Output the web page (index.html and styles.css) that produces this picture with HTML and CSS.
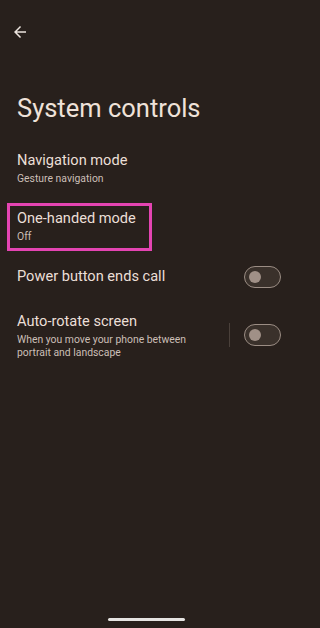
FILE: index.html
```html
<!DOCTYPE html>
<html>
<head>
<meta charset="utf-8">
<link rel="stylesheet" href="styles.css">
</head>
<body>
<div class="screen">
  <div class="topbar">
    <svg class="back" viewBox="0 0 24 24" width="18" height="18"><path d="M20 11H7.83l5.59-5.59L12 4l-8 8 8 8 1.41-1.41L7.83 13H20v-2z" fill="#ece4de"/></svg>
  </div>
  <h1 class="title">System controls</h1>
  <div class="list">
    <div class="item">
      <div class="text">
        <div class="label">Navigation mode</div>
        <div class="sub">Gesture navigation</div>
      </div>
    </div>
    <div class="item highlighted">
      <div class="text">
        <div class="label">One-handed mode</div>
        <div class="sub">Off</div>
      </div>
      <div class="mark"></div>
    </div>
    <div class="item">
      <div class="text">
        <div class="label">Power button ends call</div>
      </div>
      <div class="switch"><div class="knob"></div></div>
    </div>
    <div class="item">
      <div class="text narrow">
        <div class="label">Auto-rotate screen</div>
        <div class="sub">When you move your phone between portrait and landscape</div>
      </div>
      <div class="divider"></div>
      <div class="switch"><div class="knob"></div></div>
    </div>
  </div>
  <div class="navbar"><div class="handle"></div></div>
</div>
</body>
</html>
```
FILE: styles.css
```css
html, body {
  margin: 0;
  padding: 0;
  background: #28201c;
}
body {
  font-family: Roboto, "Noto Sans", sans-serif;
  color: #ece0d8;
}
.screen {
  width: 293px;
  height: 628px;
  display: flex;
  flex-direction: column;
  overflow: hidden;
}
.topbar {
  padding: 23px 0 0 11px;
  height: 18px;
}
.back {
  display: block;
}
.title {
  margin: 51px 0 0 17px;
  font-size: 25.5px;
  line-height: 32px;
  font-weight: 400;
  color: #efe2d9;
}
.list {
  margin-top: 14px;
  display: flex;
  flex-direction: column;
}
.item {
  position: relative;
  display: flex;
  align-items: center;
  padding: 11.5px 12px 11.5px 17px;
}
.text {
  flex: 1;
  min-width: 0;
}
.text.narrow {
  max-width: 196px;
}
.label {
  font-size: 14.6px;
  line-height: 21px;
  color: #ebdfd7;
}
.sub {
  margin-top: 1px;
  font-size: 10.4px;
  line-height: 13px;
  color: #cbbfb7;
}
.mark {
  position: absolute;
  left: 7px;
  top: 7px;
  width: 139px;
  height: 42px;
  border: 3px solid #e444b2;
}
.switch {
  box-sizing: border-box;
  width: 37px;
  height: 22px;
  border-radius: 11px;
  border: 1.5px solid #9b8d84;
  background: #3a312b;
  display: flex;
  align-items: center;
  padding-left: 4px;
  flex: none;
}
.knob {
  width: 12px;
  height: 12px;
  border-radius: 50%;
  background: #a09087;
}
.divider {
  width: 1px;
  height: 24px;
  background: #4a403a;
  margin-right: 14px;
  margin-left: auto;
}
.navbar {
  margin-top: auto;
  padding-bottom: 7px;
  display: flex;
  justify-content: center;
}
.handle {
  width: 77px;
  height: 3px;
  border-radius: 2px;
  background: #e6e4e2;
}
```
